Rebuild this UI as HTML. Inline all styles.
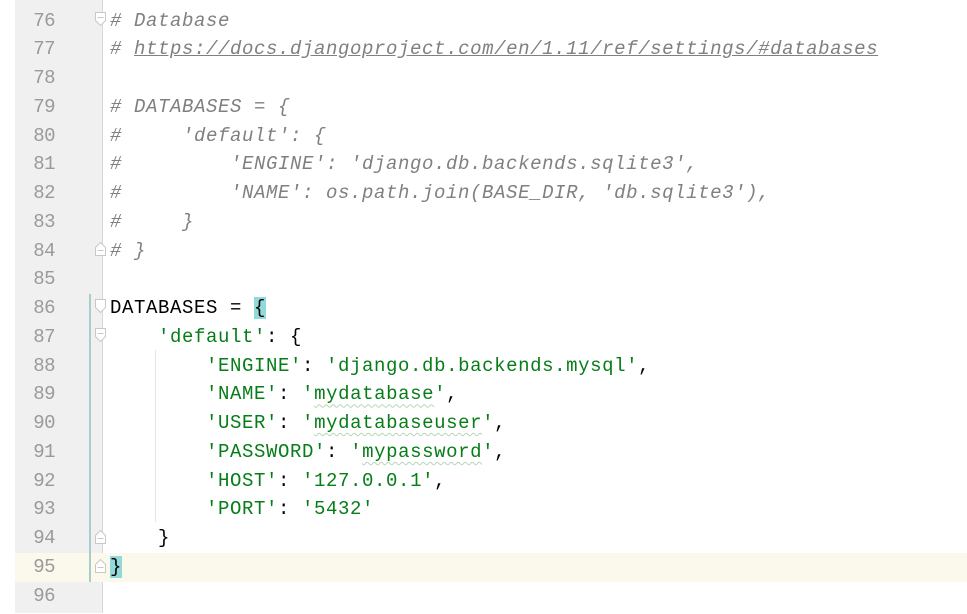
<!DOCTYPE html>
<html><head><meta charset="utf-8"><style>
html,body{margin:0;padding:0;width:967px;height:613px;overflow:hidden;background:#fff}
#gut{position:absolute;left:15px;top:0;width:87px;height:613px;background:#f0f0f0;border-right:1px solid #d8d8d8}
#band{position:absolute;left:15px;top:553px;width:952px;height:29px;background:#fbf9ec}
#wrap{position:absolute;left:0;top:1px;width:967px;height:613px}
.ln{position:absolute;left:15px;width:40px;text-align:right;font:19px "Liberation Mono",monospace;letter-spacing:-0.5px;color:#9a9a9a;height:28.75px;line-height:28.75px}
.cd{position:absolute;left:110px;white-space:pre;font:19px "Liberation Mono",monospace;letter-spacing:0.6px;color:#000;height:28.75px;line-height:28.75px}
.c{color:#808080;font-style:italic}
.u{text-decoration:underline}
.s{color:#067d17}
.t{text-decoration:underline wavy #b5d6b5;text-decoration-thickness:1px;text-underline-offset:4px}
.b{background:#93d9d9}
#bar{position:absolute;left:89px;top:294px;width:2px;height:288px;background:#a9cccc}
#ig{position:absolute;left:155px;top:350px;width:1px;height:172px;background:#e4e4e4}
.f{position:absolute;left:95px;width:11px;height:14px}
</style></head><body>
<div id="gut"></div>
<div id="band"></div>
<div id="bar"></div>
<div id="ig"></div>
<svg class="f" style="top:12px" viewBox="0 0 11 14"><path d="M0.5 0.5H10.5V8.5L5.5 13.5L0.5 8.5Z M2.5 5.5H8.5" fill="#fff" stroke="#c8c8c8"/></svg>
<svg class="f" style="top:242px" viewBox="0 0 11 14"><path d="M0.5 13.5H10.5V5.5L5.5 0.5L0.5 5.5Z M2.5 8.5H8.5" fill="#fff" stroke="#c8c8c8"/></svg>
<svg class="f" style="top:299px" viewBox="0 0 11 14"><path d="M0.5 0.5H10.5V8.5L5.5 13.5L0.5 8.5Z" fill="#fff" stroke="#c8c8c8"/></svg>
<svg class="f" style="top:328px" viewBox="0 0 11 14"><path d="M0.5 0.5H10.5V8.5L5.5 13.5L0.5 8.5Z M2.5 5.5H8.5" fill="#fff" stroke="#c8c8c8"/></svg>
<svg class="f" style="top:530px" viewBox="0 0 11 14"><path d="M0.5 13.5H10.5V5.5L5.5 0.5L0.5 5.5Z M2.5 8.5H8.5" fill="#fff" stroke="#c8c8c8"/></svg>
<svg class="f" style="top:559px" viewBox="0 0 11 14"><path d="M0.5 13.5H10.5V5.5L5.5 0.5L0.5 5.5Z M2.5 8.5H8.5" fill="#fff" stroke="#c8c8c8"/></svg>
<div id="wrap">
<div class="ln" style="top:5.6px">76</div>
<div class="ln" style="top:34.35px">77</div>
<div class="ln" style="top:63.1px">78</div>
<div class="ln" style="top:91.85px">79</div>
<div class="ln" style="top:120.6px">80</div>
<div class="ln" style="top:149.35px">81</div>
<div class="ln" style="top:178.1px">82</div>
<div class="ln" style="top:206.85px">83</div>
<div class="ln" style="top:235.6px">84</div>
<div class="ln" style="top:264.35px">85</div>
<div class="ln" style="top:293.1px">86</div>
<div class="ln" style="top:321.85px">87</div>
<div class="ln" style="top:350.6px">88</div>
<div class="ln" style="top:379.35px">89</div>
<div class="ln" style="top:408.1px">90</div>
<div class="ln" style="top:436.85px">91</div>
<div class="ln" style="top:465.6px">92</div>
<div class="ln" style="top:494.35px">93</div>
<div class="ln" style="top:523.1px">94</div>
<div class="ln" style="top:551.85px">95</div>
<div class="ln" style="top:580.6px">96</div>

<div class="cd c" style="top:5.6px"># Database</div>
<div class="cd c" style="top:34.35px"># <span class="u">https://docs.djangoproject.com/en/1.11/ref/settings/#databases</span></div>
<div class="cd c" style="top:91.85px"># DATABASES = {</div>
<div class="cd c" style="top:120.6px">#     'default': {</div>
<div class="cd c" style="top:149.35px">#         'ENGINE': 'django.db.backends.sqlite3',</div>
<div class="cd c" style="top:178.1px">#         'NAME': os.path.join(BASE_DIR, 'db.sqlite3'),</div>
<div class="cd c" style="top:206.85px">#     }</div>
<div class="cd c" style="top:235.6px"># }</div>
<div class="cd" style="top:293.1px">DATABASES = <span class="b">{</span></div>
<div class="cd" style="top:321.85px">    <span class="s">'default'</span>: {</div>
<div class="cd" style="top:350.6px">        <span class="s">'ENGINE'</span>: <span class="s">'django.db.backends.mysql'</span>,</div>
<div class="cd" style="top:379.35px">        <span class="s">'NAME'</span>: <span class="s">'<span class="t">mydatabase</span>'</span>,</div>
<div class="cd" style="top:408.1px">        <span class="s">'USER'</span>: <span class="s">'<span class="t">mydatabaseuser</span>'</span>,</div>
<div class="cd" style="top:436.85px">        <span class="s">'PASSWORD'</span>: <span class="s">'<span class="t">mypassword</span>'</span>,</div>
<div class="cd" style="top:465.6px">        <span class="s">'HOST'</span>: <span class="s">'127.0.0.1'</span>,</div>
<div class="cd" style="top:494.35px">        <span class="s">'PORT'</span>: <span class="s">'5432'</span></div>
<div class="cd" style="top:523.1px">    }</div>
<div class="cd" style="top:551.85px"><span class="b">}</span></div>
</div>
</body></html>
